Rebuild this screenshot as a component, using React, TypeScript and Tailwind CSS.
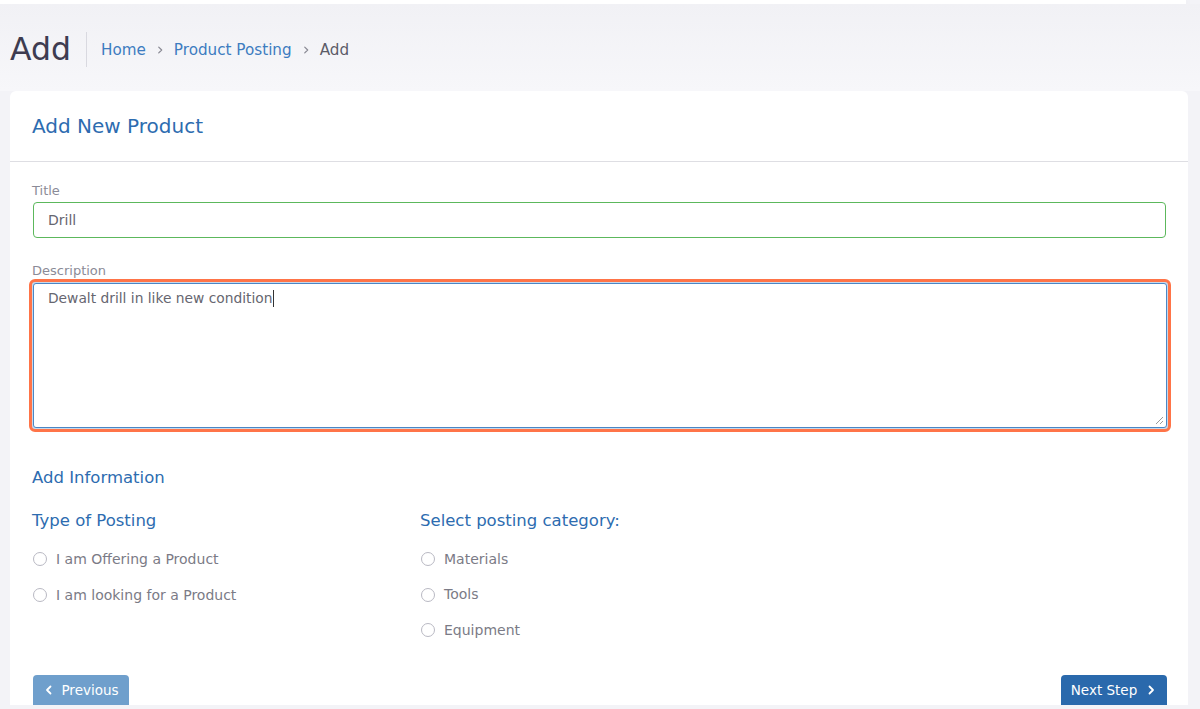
import React from "react";

const font = { fontFamily: '"DejaVu Sans", "Open Sans", sans-serif' };

function Radio({ label }: { label: string }) {
  return (
    <label className="flex items-center h-[20px] text-[14px] text-[#7b7b86]">
      <span className="w-[14px] h-[14px] rounded-full border border-[#b9b9c3] bg-white mr-[9px] ml-[1px]" />
      {label}
    </label>
  );
}

function Chevron({ dir, size = 12, sw = 1.8 }: { dir: "left" | "right"; size?: number; sw?: number }) {
  return (
    <svg width={size} height={size} viewBox="0 0 12 12" fill="none" stroke="currentColor" strokeWidth={sw} strokeLinecap="round" strokeLinejoin="round">
      {dir === "left" ? <path d="M7.5 2.5 4 6l3.5 3.5" /> : <path d="M4.5 2.5 8 6 4.5 9.5" />}
    </svg>
  );
}

export default function App() {
  return (
    <div className="w-[1200px] h-[709px] overflow-hidden bg-[#f3f3f7] relative" style={font}>
      <div className="h-[4px] w-[1186px] bg-white shadow-[0_2px_8px_rgba(0,0,0,0.07)]" />
      <div className="h-[87px] bg-gradient-to-b from-[#f1f1f5] to-[#f7f7fa] flex items-center pl-[10px] pt-[4px]">
        <h1 className="text-[31.5px] leading-none text-[#3e3c50] pr-[15px] mt-[1px]">Add</h1>
        <div className="w-px h-[35px] bg-[#d9d9e0] mr-[14px]" />
        <nav className="flex items-center text-[15.2px] mt-[2px]">
          <span className="text-[#3d7cc0]">Home</span>
          <span className="text-[#8a8a94] mx-[9px]"><Chevron dir="right" size={10} sw={1.5} /></span>
          <span className="text-[#3d7cc0]">Product Posting</span>
          <span className="text-[#8a8a94] mx-[9px]"><Chevron dir="right" size={10} sw={1.5} /></span>
          <span className="text-[#5c5c68]">Add</span>
        </nav>
      </div>
      <div className="ml-[10px] w-[1178px] h-[614px] bg-white rounded-t-[6px] overflow-hidden flex flex-col">
        <div className="h-[71px] border-b border-[#dedee3] flex items-center px-[22px]">
          <h2 className="text-[20px] text-[#2d6cb0]">Add New Product</h2>
        </div>
        <div className="px-[22px] pt-[20px] flex flex-col flex-1">
          <div className="text-[13px] text-[#8b8b97] leading-[18px]">Title</div>
          <div className="mt-[2px] ml-[1px] h-[36px] border border-[#5cb85c] rounded-[4px] flex items-center px-[14px] text-[14px] text-[#666670]">
            Drill
          </div>
          <div className="text-[13px] text-[#8b8b97] leading-[18px] mt-[24px]">Description</div>
          <div className="-mt-[1px] -ml-[3px] -mr-[5px] rounded-[6px] border-[3px] border-[#ff7448] p-[1px] bg-[#c7d8ea]">
            <div className="h-[145px] rounded-[3px] border border-[#4a86c5] bg-white relative px-[14px] pt-[4px] text-[13.8px] text-[#666670]">
              <span>Dewalt drill in like new condition</span>
              <span className="inline-block w-px h-[17px] bg-[#333] align-middle -mt-[2px]" />
              <svg className="absolute right-[2px] bottom-[2px]" width="9" height="9" viewBox="0 0 9 9" stroke="#9a9a9a" strokeWidth="1">
                <path d="M8 1 1 8M8 5 5 8" />
              </svg>
            </div>
          </div>
          <h3 className="text-[16.5px] text-[#2d6cb0] mt-[35px] leading-[22px]">Add Information</h3>
          <div className="grid grid-cols-[388px_1fr] mt-[21px]">
            <div>
              <h4 className="text-[16.5px] text-[#2d6cb0] leading-[22px]">Type of Posting</h4>
              <div className="mt-[17px] flex flex-col gap-[16px]">
                <Radio label="I am Offering a Product" />
                <Radio label="I am looking for a Product" />
              </div>
            </div>
            <div>
              <h4 className="text-[16.5px] text-[#2d6cb0] leading-[22px]">Select posting category:</h4>
              <div className="mt-[17px] flex flex-col gap-[15.5px]">
                <Radio label="Materials" />
                <Radio label="Tools" />
                <Radio label="Equipment" />
              </div>
            </div>
          </div>
          <div className="mt-auto flex justify-between pl-[1px] -mr-[1px]">
            <button className="h-[30px] w-[96px] justify-center rounded-t-[4px] bg-[#6f9fcc] text-white text-[13.5px] flex items-center gap-[6px]">
              <Chevron dir="left" />
              Previous
            </button>
            <button className="h-[30px] w-[106px] justify-center rounded-t-[4px] bg-[#2a69ac] text-white text-[13.5px] flex items-center gap-[8px]">
              Next Step
              <Chevron dir="right" />
            </button>
          </div>
        </div>
      </div>
    </div>
  );
}
